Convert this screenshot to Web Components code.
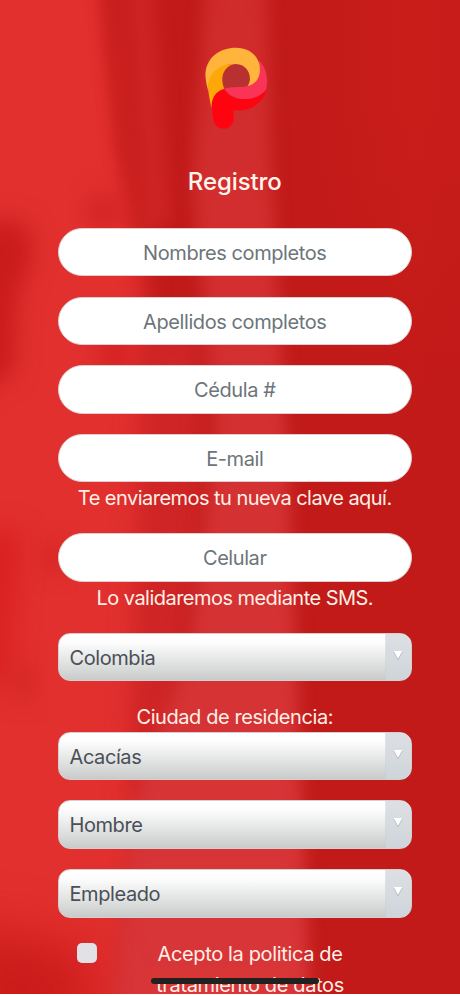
<!DOCTYPE html>
<html lang="es">
<head>
<meta charset="utf-8">
<meta name="viewport" content="width=device-width, initial-scale=1">
<title>Registro</title>
<style>
    html, body {
        margin: 0;
        height: 100%;
        overflow: hidden;
        background: #fff;
    }
    body {
        font-family: Inter, "Liberation Sans", sans-serif;
        font-size: 20px;
        letter-spacing: -.42px;
    }
</style>
</head>
<body>
<register-page>
    <page-backdrop slot="backdrop"></page-backdrop>
    <brand-logo></brand-logo>
    <page-title>Registro</page-title>
    <text-field placeholder="Nombres completos"></text-field>
    <text-field placeholder="Apellidos completos"></text-field>
    <text-field placeholder="Cédula #"></text-field>
    <text-field placeholder="E-mail">Te enviaremos tu nueva clave aquí.</text-field>
    <text-field placeholder="Celular">Lo validaremos mediante SMS.</text-field>
    <select-field value="Colombia"></select-field>
    <select-field value="Acacías">Ciudad de residencia:</select-field>
    <select-field value="Hombre"></select-field>
    <select-field value="Empleado"></select-field>
    <terms-check>Acepto la politica de tratamiento de datos</terms-check>
    <home-indicator slot="overlay"></home-indicator>
</register-page>

<script>
class RegisterPage extends HTMLElement {
    constructor() {
        super();
        this.attachShadow({ mode: 'open' });
        this.shadowRoot.innerHTML = `
            <style>
                :host {
                    display: grid;
                    position: relative;
                    height: 994px;
                    overflow: hidden;
                    background: #c41a19;
                }
                ::slotted([slot="backdrop"]), main {
                    grid-area: 1 / 1;
                }
                main {
                    position: relative;
                    display: flex;
                    flex-direction: column;
                    gap: 20.2px;
                    padding: 46.5px 48.5px 0 58px;
                    height: 994px;
                    box-sizing: border-box;
                }
            </style>
            <slot name="backdrop"></slot>
            <main><slot></slot></main>
            <slot name="overlay"></slot>
        `;
    }
}

// Out-of-focus red photo behind the form
class PageBackdrop extends HTMLElement {
    constructor() {
        super();
        this.attachShadow({ mode: 'open' });
        this.shadowRoot.innerHTML = `
            <style>
                :host { display: block; height: 994px; overflow: hidden; }
                svg { display: block; }
                filter { color-interpolation-filters: sRGB; }
            </style>
            <svg width="460" height="994" viewBox="0 0 460 994" aria-hidden="true">
                <defs>
                    <filter id="b6" x="-50%" y="-50%" width="200%" height="200%"><feGaussianBlur stdDeviation="8"/></filter>
                    <filter id="b12" x="-80%" y="-80%" width="260%" height="260%"><feGaussianBlur stdDeviation="12"/></filter>
                    <filter id="b22" x="-50%" y="-50%" width="200%" height="200%"><feGaussianBlur stdDeviation="26"/></filter>
                    <linearGradient id="band" x1="0" y1="0" x2="0" y2="1">
                        <stop offset="0" stop-color="#d02b2b"/>
                        <stop offset=".5" stop-color="#d43133"/>
                        <stop offset="1" stop-color="#d93639"/>
                    </linearGradient>
                    <linearGradient id="side" x1="0" y1="0" x2="1" y2="0">
                        <stop offset=".62" stop-color="#c11a19"/>
                        <stop offset=".9" stop-color="#c91d1a"/>
                        <stop offset="1" stop-color="#c71c1a"/>
                    </linearGradient>
                    <linearGradient id="fade" x1="0" y1="0" x2="0" y2="1">
                        <stop offset=".1" stop-color="#c11a19" stop-opacity="0"/>
                        <stop offset=".5" stop-color="#c11a19"/>
                    </linearGradient>
                </defs>
                <rect width="460" height="994" fill="url(#side)"/>
                <rect width="460" height="994" fill="url(#fade)"/>
                <path d="M-60-60H105L130 200L165 420L150 700L120 1060H-60Z" fill="#e2302f" filter="url(#b12)"/>
                <path d="M122-40H152L172 220L140 240Z" fill="#cd2423" filter="url(#b6)"/>
                <path d="M98-40H112L132 190L118 150Z" fill="#c61d1c" filter="url(#b6)"/>
                <path d="M142 330H205L200 560L160 800L130 800Z" fill="#cf2526" filter="url(#b12)"/>
                <path d="M208-40H266L272 180L290 500L302 800L312 1040H105L135 800L190 640L215 430L192 180Z" fill="url(#band)" filter="url(#b6)"/>
                <path d="M-30 222H24L34 250L16 300L14 370L-30 400Z" fill="#c81c1b" filter="url(#b12)"/>
                <ellipse cx="102" cy="212" rx="12" ry="18" fill="#c92120" filter="url(#b12)"/>
                <ellipse cx="115" cy="350" rx="14" ry="28" fill="#d32020" filter="url(#b12)"/>
                <path d="M-20 530H22L8 680L-20 690Z" fill="#d92120" filter="url(#b12)"/>
                <ellipse cx="54" cy="558" rx="9" ry="14" fill="#cd1e1d" filter="url(#b12)"/>
                <ellipse cx="24" cy="682" rx="9" ry="18" fill="#cf2221" filter="url(#b12)"/>
                <path d="M-40 925L90 950V1040H-40Z" fill="#cb1b1a" filter="url(#b22)"/>
            </svg>
        `;
    }
}

class BrandLogo extends HTMLElement {
    constructor() {
        super();
        this.attachShadow({ mode: 'open' });
        this.shadowRoot.innerHTML = `
            <style>
                :host { display: flex; justify-content: center; padding-left: 4px; height: 83px; }
                svg { width: 63.3px; height: 83.3px; }
            </style>
            <svg viewBox="45 35 190 250" aria-label="Logo">
                <circle cx="138" cy="123" r="44" fill="#b8302f"/>
                <path fill="#fe0410" d="M103 160C78 165 62 190 65 216L70 250C73 290 130 290 131 250L130 225C178 230 222 204 230 160C200 195 125 208 103 160Z"/>
                <path fill="#fa3457" d="M208 76C224 92 232 115 231 140Q231 152 228 164C195 202 130 200 103 161C125 152 150 158 173 152L190 125Z"/>
                <path fill="#ffb43c" d="M55 168C47 140 45 120 47 108C53 65 90 37 138 37C182 37 210 66 210 102C210 130 196 147 173 152C184 138 182 111 166 97C156 88 146 86 135 86C85 86 53 120 55 168Z"/>
                <path fill="#fda808" d="M55 168C49 118 85 83 135 86C100 92 89 128 103 160C74 168 63 192 65 220C60 200 57 180 55 168Z"/>
            </svg>
        `;
    }
}

class PageTitle extends HTMLElement {
    constructor() {
        super();
        this.attachShadow({ mode: 'open' });
        this.shadowRoot.innerHTML = `
            <style>
                :host { display: block; padding: 15px 0 9px; }
                h1 {
                    margin: 0;
                    font-size: 24px;
                    font-weight: 450;
                    line-height: 34px;
                    letter-spacing: -.1px;
                    text-align: center;
                    color: #fff5ec;
                }
            </style>
            <h1><slot></slot></h1>
        `;
    }
}

class TextField extends HTMLElement {
    constructor() {
        super();
        this.attachShadow({ mode: 'open' });
        this.shadowRoot.innerHTML = `
            <style>
                :host { display: block; }
                .box {
                    height: 48.5px;
                    box-sizing: border-box;
                    border: 1px solid #dccfd1;
                    border-radius: 25px;
                    background: #fff;
                    color: #6c757a;
                    line-height: 48px;
                    text-align: center;
                }
                .hint {
                    position: relative;
                    top: 1px;
                    line-height: 30.6px;
                    letter-spacing: -.53px;
                    text-align: center;
                    color: #fff0e6;
                    white-space: nowrap;
                }
            </style>
            <div class="box"></div>
            <div class="hint"><slot></slot></div>
        `;
    }

    connectedCallback() {
        this.shadowRoot.querySelector('.box').textContent = this.getAttribute('placeholder');
    }
}

class SelectField extends HTMLElement {
    constructor() {
        super();
        this.attachShadow({ mode: 'open' });
        this.shadowRoot.innerHTML = `
            <style>
                :host { display: block; }
                .label {
                    position: relative;
                    top: 1px;
                    line-height: 30.6px;
                    text-align: center;
                    color: #fff0e6;
                }
                .box {
                    display: flex;
                    height: 48.5px;
                    box-sizing: border-box;
                    border: 1px solid #d3cfd0;
                    border-radius: 12px;
                    overflow: hidden;
                    background: linear-gradient(#fff 0%, #fdfdfd 18%, #e4e5e5 58%, #c9caca 100%);
                    color: #495057;
                }
                .value {
                    flex: 1;
                    padding-left: 10.5px;
                    line-height: 48px;
                }
                .arrow {
                    display: flex;
                    justify-content: center;
                    width: 25px;
                    background: linear-gradient(#dddfe3, #d4dade 60%, #cdd5db);
                    box-shadow: -1px 0 0 rgba(200, 205, 208, .5);
                }
                svg { width: 10px; height: 10px; margin-top: 16px; }
            </style>
            <div class="label"><slot></slot></div>
            <div class="box">
                <span class="value"></span>
                <span class="arrow">
                    <svg viewBox="0 0 10 10"><path d="M1 2L5 9.7L9 2" fill="none" stroke="#b4babd" stroke-width="1"/><path d="M.8 1H9.2L5 8.8Z" fill="#fff"/></svg>
                </span>
            </div>
        `;
    }

    connectedCallback() {
        this.shadowRoot.querySelector('.value').textContent = this.getAttribute('value');
    }
}

class TermsCheck extends HTMLElement {
    constructor() {
        super();
        this.attachShadow({ mode: 'open' });
        this.shadowRoot.innerHTML = `
            <style>
                :host {
                    display: flex;
                    align-items: flex-start;
                    padding-left: 19px;
                }
                .check {
                    width: 20px;
                    height: 20.5px;
                    margin-top: 5px;
                    border-radius: 5px;
                    background: #e2e2e6;
                }
                .text {
                    width: 220px;
                    margin: 1px 0 0 43px;
                    line-height: 30.8px;
                    letter-spacing: -.36px;
                    text-align: center;
                    color: #fff0e6;
                }
            </style>
            <span class="check" role="checkbox" aria-checked="false"></span>
            <span class="text"><slot></slot></span>
        `;
    }
}

class HomeIndicator extends HTMLElement {
    constructor() {
        super();
        this.attachShadow({ mode: 'open' });
        this.shadowRoot.innerHTML = `
            <style>
                :host {
                    position: absolute;
                    left: 151px;
                    bottom: 10px;
                    width: 168px;
                    height: 6.5px;
                    border-radius: 4px;
                    background: #222120;
                }
            </style>
        `;
    }
}

customElements.define('register-page', RegisterPage);
customElements.define('page-backdrop', PageBackdrop);
customElements.define('brand-logo', BrandLogo);
customElements.define('page-title', PageTitle);
customElements.define('text-field', TextField);
customElements.define('select-field', SelectField);
customElements.define('terms-check', TermsCheck);
customElements.define('home-indicator', HomeIndicator);
</script>
</body>
</html>
